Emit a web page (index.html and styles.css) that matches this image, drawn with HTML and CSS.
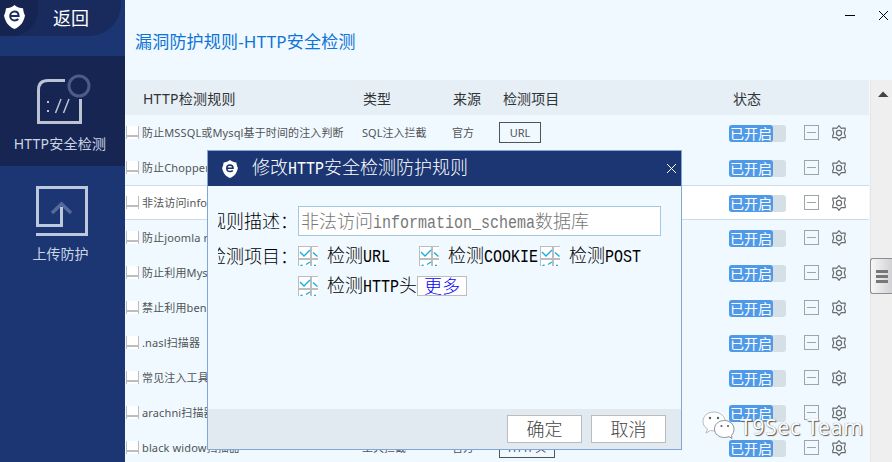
FILE: index.html
```
<!DOCTYPE html>
<html lang="zh-CN">
<head>
<meta charset="utf-8">
<title>漏洞防护规则</title>
<link rel="stylesheet" href="styles.css">
</head>
<body>
<svg width="0" height="0" class="defs" aria-hidden="true">
  <symbol id="shield" viewBox="0 0 21 24"><path fill="#fff" d="M10.500 0C13 2.300 16 3.200 19 3.300C19.300 6 20 9 21 10.500C20 16 17 21.500 10.500 24C4 21.500 1 16 0 10.500C1 9 1.700 6 2 3.300C5 3.200 8 2.300 10.500 0Z"/><path fill="none" stroke="#1a2f62" stroke-width="2" d="M6.300 10.900H14.600C14.500 8 12.700 6.500 10.500 6.500C8 6.500 6.200 8.500 6.200 11S8 15.400 10.600 15.400C12.200 15.400 13.400 14.900 14.300 14"/></symbol>
  <symbol id="gear" viewBox="0 0 16 16"><path fill="none" stroke="#686e70" stroke-width="1.200" stroke-linejoin="round" d="M6.700 2.200L8 .7L9.300 2.200L10.300 3.300L12 3L14.200 3.200L14.100 5.500L13.400 7L13.500 9L14.300 10.500L14.200 12.700L12 12.700L10.500 12.500L9.300 13.700L8 15.300L6.700 13.700L5.500 12.500L4 12.700L1.800 12.700L1.700 10.500L2.500 9L2.600 7L1.900 5.500L1.800 3.200L4 3L5.700 3.300Z"/><circle cx="8" cy="8" r="2.600" fill="none" stroke="#686e70" stroke-width="1.200"/></symbol>
  <symbol id="tick" viewBox="0 0 20 20"><path fill="#fff" d="M0 0H20V20H0Z"/><path fill="none" stroke="#bdbdbd" d="M0 .5H20M.5 0V20M12.500 0V20M13.500 0V20M0 12.500H20M0 13.500H20"/><path fill="none" stroke="#12b0e5" stroke-width="1.400" d="M2 6L6 10L12 4M15 6.500L19.500 10.500M2.500 20L4.500 19M8 18.500L12 16M16 19.500H18"/></symbol>
</svg>
<div class="app">
  <nav class="side">
    <div class="back"><div class="logo"><svg class="mark"><use href="#shield"/></svg></div><span>返回</span></div>
    <div class="item on">
      <svg width="56" height="54" viewBox="0 0 56 54"><path fill="none" stroke="#bcc4d4" stroke-width="3" d="M30 7.500H13Q3.500 7.500 3.500 17V49.500H45.500V26"/><circle cx="44" cy="13" r="10" fill="none" stroke="#4b5c87" stroke-width="3"/><path fill="none" stroke="#bcc4d4" stroke-width="1.500" d="M26 26L20.500 40M34 26L28.500 40"/><path fill="#bcc4d4" d="M12 28h2v2h-2zM12 37h2v2h-2z"/></svg>
      <span>HTTP安全检测</span>
    </div>
    <div class="item up">
      <svg width="52" height="50" viewBox="0 0 52 50"><path fill="none" stroke="#56699a" stroke-width="3.500" d="M16 27L25.500 18L35 27"/><path fill="none" stroke="#bcc8de" stroke-width="3" d="M0 48.500H50.500V1.500H1.500V39.500H25.500V21"/></svg>
      <span>上传防护</span>
    </div>
  </nav>
  <main class="main">
    <header class="top">
      <h1>漏洞防护规则-HTTP安全检测</h1>
      <svg class="win" width="46" height="16" viewBox="0 0 46 16"><path fill="none" stroke="#000" d="M1 7.500H11M35 3L44 12M44 3L35 12"/></svg>
    </header>
    <div class="body">
      <section class="table">
        <div class="row head"><span class="name">HTTP检测规则</span><span class="kind">类型</span><span class="src">来源</span><span class="tags">检测项目</span><span class="state">状态</span></div>
        <div id="rows"></div>
      </section>
      <aside class="scroll">
        <svg width="22" height="30" viewBox="0 0 22 30"><path fill="#444" d="M8 17L13 11.500L18.500 17Z"/></svg>
        <div class="thumb"><i></i><i></i><i></i></div>
      </aside>
    </div>
  </main>
</div>

<div class="dialog">
  <div class="bar"><svg class="mark"><use href="#shield"/></svg><span class="caption">修改<b>HTTP</b>安全检测防护规则</span><svg class="x" width="11" height="11" viewBox="0 0 11 11"><path stroke="#fff" d="M1 1L10 10M10 1L1 10"/></svg></div>
  <div class="form">
    <div class="line desc"><div class="label"><span>规则描述：</span></div><div class="input">非法访问<b>information_schema</b>数据库</div></div>
    <div class="line"><div class="label"><span>检测项目：</span></div>
      <div class="check"><svg><use href="#tick"/></svg><span>检测<b>URL</b></span></div>
      <div class="check"><svg><use href="#tick"/></svg><span>检测<b>COOKIE</b></span></div>
      <div class="check"><svg><use href="#tick"/></svg><span>检测<b>POST</b></span></div>
    </div>
    <div class="line second"><div class="check head4"><svg><use href="#tick"/></svg><span>检测<b>HTTP</b>头</span></div><div class="more">更多</div></div>
  </div>
  <div class="foot"><button>确定</button><button>取消</button></div>
</div>

<div class="watermark">
  <svg width="34" height="30" viewBox="0 0 34 30"><path fill="#fff" stroke="#a3abb0" stroke-width=".8" d="M12 1C5 1 1 5.500 1 10.500C1 14 3 16.500 5.500 18L4 22L8.500 19.500C15 21 23 18 23 10.500C23 5 18 1 12 1Z"/><path fill="#fff" stroke="#70777c" stroke-width=".8" d="M22.500 9.500C16.500 9.500 12.500 13.500 12.500 18C12.500 23 17 26.500 22.500 26.500C24 26.500 25.500 26.200 27 25.600L30 27.500L29.500 24.300C31 23 32 20.500 32 18C32 13.500 28 9.500 22.500 9.500Z"/><g fill="#596268"><circle cx="8" cy="7" r="1.200"/><circle cx="16" cy="7" r="1.200"/><circle cx="19.500" cy="15" r="1.100"/><circle cx="26" cy="15" r="1.100"/></g></svg>
  <span>T9Sec Team</span>
</div>
<script src="rows.js"></script>
</body>
</html>
```
FILE: styles.css
```
* { box-sizing: border-box; }
body { margin: 0; overflow: hidden; font-family: "Noto Sans", "Noto Sans CJK SC", sans-serif; }
b { font-weight: inherit; }
svg { display: block; flex: none; }
.defs { position: absolute; }
.app { display: flex; width: 892px; height: 462px; overflow: hidden; }

.side { width: 125px; flex: none; background: #1b3672; color: #ccd5e6; }
.back { display: flex; align-items: center; width: 121px; height: 36px; margin-bottom: 20px; background: #182b5c; border-radius: 0 0 32px 0; font-family: "Noto Sans CJK SC", sans-serif; font-size: 18px; color: #fff; }
.back span { padding-bottom: 3px; }
.logo { width: 38px; height: 36px; padding: 5px 0 0 4px; margin-right: 15px; background: #162452; border-radius: 0 0 26px 0; }
.logo .mark { width: 21px; height: 24px; }
.item { display: flex; flex-direction: column; align-items: center; height: 110px; font-size: 14px; line-height: 20px; white-space: nowrap; }
.item.on { background: #162552; padding: 17px 5px 0 0; }
.item.on svg { margin-left: 6px; }
.item.on span { margin-top: 7px; letter-spacing: .25px; }
.item.up { padding: 20px 4px 0 0; }
.item.up svg { margin-left: 3px; }
.item.up span { margin-top: 8px; }

.main { display: flex; flex-direction: column; width: 767px; background: #f0f9ff; }
.top { display: flex; justify-content: space-between; height: 80px; padding: 8px 2px 0 10px; }
h1 { margin: 22px 0 0; font-size: 17px; line-height: 24px; font-weight: 400; color: #0f74d5; white-space: nowrap; letter-spacing: .2px; }
.body { display: flex; height: 382px; }
.table { width: 744px; flex: none; }
.row { display: flex; align-items: center; width: 744px; height: 35px; font-size: 11px; color: #505456; white-space: nowrap; }
.row.hot { background: #fff; border: solid #c8dcec; border-width: 1px 0; }
.row.head { background: #e6eff5; color: #303437; font-size: 14px; letter-spacing: .1px; }
.row.head .name { padding-left: 18px; letter-spacing: .25px; }
.row.head .state { padding-left: 4px; }
.tick { width: 13px; height: 13px; margin: 0 3px 0 1px; flex: none; border: solid #bdbdbd; border-width: 0 1px; background: linear-gradient(#fff 9px, #bdbdbd 9px, #bdbdbd 11px, #fff 11px); }
.name { width: 237px; flex: none; }
.row:not(.head) .name { width: 220px; letter-spacing: .13px; }
.row:not(.head) > .name, .row:not(.head) > .kind, .row:not(.head) > .src { padding-bottom: 2px; }
.kind { width: 90px; flex: none; }
.src { width: 47px; flex: none; }
.head .kind { padding-left: 1px; }
.head .src { width: 50px; padding-left: 1px; }
.tags { width: 230px; flex: none; }
.head .tags { width: 227px; padding-left: 1px; }
.tag { display: inline-block; min-width: 42px; height: 21px; padding: 0 8px; border: 1px solid #505456; line-height: 19px; text-align: center; vertical-align: middle; }
.toggle { width: 57px; height: 17px; margin: 2px 18px 0 0; flex: none; border-radius: 3px; background: #d5e0e6; }
.toggle span { display: block; width: 44px; height: 17px; border-radius: 3px; background: #4f9ae8; color: #fff; font: 400 14px/17px "Noto Sans CJK SC", sans-serif; text-align: center; }
.minus { display: flex; align-items: center; justify-content: center; width: 15px; height: 15px; margin-right: 12px; border: 1px solid #9ea5a8; }
.minus i { width: 9px; height: 1px; background: #9ea5a8; }
.gear { width: 16px; height: 16px; }

.scroll { width: 22px; margin-left: 1px; background: #efefef; box-shadow: inset 1px 0 #e6e6e6; }
.thumb { display: flex; flex-direction: column; align-items: center; justify-content: center; gap: 2px; height: 36px; margin-top: 148px; border: 1px solid #8e8e8e; border-right: 0; border-radius: 3px 0 0 3px; background: linear-gradient(90deg, #f7f7f7, #d2d2d6); }
.thumb i { width: 12px; height: 3px; border: solid #777; border-width: 1px 0 2px; }

.dialog { position: absolute; left: 207px; top: 150px; width: 475px; height: 300px; border: 1px solid #82a7d6; background: #f0f9ff; font-family: "Noto Sans CJK SC", sans-serif; font-weight: 300; font-size: 18px; color: #000; white-space: nowrap; }
.dialog b { display: inline-block; font-family: "Liberation Mono", monospace; font-size: 15px; font-weight: 400; line-height: 18px; transform: scaleY(1.2); transform-origin: 50% 75%; }
.bar { display: flex; align-items: center; height: 35px; padding: 0 4px 0 14px; background: #1b3672; color: #fff; }
.bar .mark { width: 16px; height: 18px; margin: 0 14px 0 0; }
.caption { flex: 1; line-height: 28px; padding-bottom: 5px; }
.form { height: 223px; padding: 20px 0 0 10px; }
.line { display: flex; align-items: center; height: 30px; }
.desc { margin-bottom: 5px; }
.label { display: flex; justify-content: flex-end; width: 80px; padding-bottom: 2px; overflow: hidden; flex: none; }
.input { width: 363px; height: 30px; padding-left: 2px; border: 1px solid #a3c8e2; background: #fff; color: #777; line-height: 26px; }
.check { display: flex; align-items: center; width: 121px; }
.check svg { width: 20px; height: 20px; margin-right: 9px; }
.check span { padding-bottom: 3px; }
.second { padding-left: 80px; }
.check.head4 { width: 119px; }
.more { width: 50px; height: 20px; border: 1px solid #bdbdbd; background: #fff; color: #00f; line-height: 16px; text-align: center; }
.foot { display: flex; justify-content: flex-end; gap: 9px; height: 40px; padding: 6px 15px 0 0; background: #e0eaf0; }
.foot button { width: 75px; height: 28px; padding: 0 0 2px; border: 1px solid #bcbcbc; background: #fff; color: #444; font: 300 18px/24px "Noto Sans CJK SC", sans-serif; }

.watermark { position: absolute; left: 702px; top: 409px; display: flex; align-items: center; font: 21px/30px "Noto Sans", sans-serif; letter-spacing: .75px; color: #fff; text-shadow: 1px 1px 1px #555, 0 0 1px #777; white-space: nowrap; }
.watermark span { margin: 3px 0 0 4px; }
```
FILE: rows.js
```
const rules = [
  ["防止MSSQL或Mysql基于时间的注入判断", "SQL注入拦截", "URL"],
  ["防止Chopper", "SQL注入拦截", "URL"],
  ["非法访问information_schema数据库", "SQL注入拦截", "URL"],
  ["防止joomla read", "SQL注入拦截", "URL"],
  ["防止利用Mysql", "SQL注入拦截", "URL"],
  ["禁止利用benchmark", "SQL注入拦截", "URL"],
  [".nasl扫描器", "工具拦截", "URL"],
  ["常见注入工具拦截", "工具拦截", "URL"],
  ["arachni扫描器", "工具拦截", "URL"],
  ["black widow扫描器", "工具拦截", "HTTP头"]
];
document.getElementById("rows").innerHTML = rules.map(([name, kind, tag], i) =>
  `<div class="row${i === 2 ? " hot" : ""}"><i class="tick"></i><span class="name">${name}</span><span class="kind">${kind}</span><span class="src">官方</span><span class="tags"><span class="tag">${tag}</span></span><span class="toggle"><span>已开启</span></span><span class="minus"><i></i></span><svg class="gear"><use href="#gear"/></svg></div>`
).join("");
```
